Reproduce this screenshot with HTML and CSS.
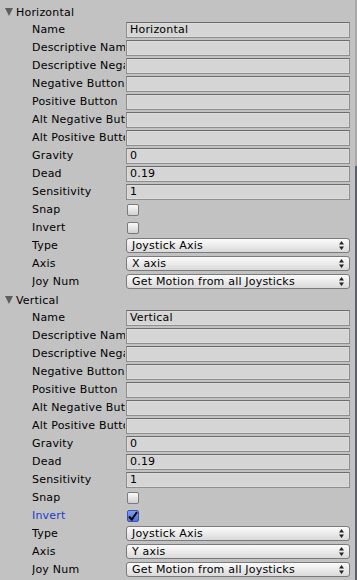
FILE: index.html
```html
<!DOCTYPE html>
<html lang="en">
<head>
    <meta charset="UTF-8">
    <meta name="viewport" content="width=device-width, initial-scale=1.0">
    <title>Input Axes</title>
    <link rel="stylesheet" href="styles.css">
</head>
<body>

<div class="inspector">
    <div class="axes">

        <!-- Horizontal axis -->
        <div class="axis">
            <div class="foldout"><span class="arrow"></span>Horizontal</div>
            <div class="props">
                <div class="label">Name</div>
                <div class="field">Horizontal</div>
                <div class="label">Descriptive Name</div>
                <div class="field"></div>
                <div class="label">Descriptive Negative Name</div>
                <div class="field"></div>
                <div class="label">Negative Button</div>
                <div class="field"></div>
                <div class="label">Positive Button</div>
                <div class="field"></div>
                <div class="label">Alt Negative Button</div>
                <div class="field"></div>
                <div class="label">Alt Positive Button</div>
                <div class="field"></div>
                <div class="label">Gravity</div>
                <div class="field">0</div>
                <div class="label">Dead</div>
                <div class="field">0.19</div>
                <div class="label">Sensitivity</div>
                <div class="field">1</div>
                <div class="label">Snap</div>
                <div class="cell"><span class="toggle"></span></div>
                <div class="label">Invert</div>
                <div class="cell"><span class="toggle"></span></div>
                <div class="label">Type</div>
                <div class="popup">Joystick Axis<svg class="updown" width="5" height="9" viewBox="0 0 5 9"><path d="M2.5 0 L5 3.5 L0 3.5 Z M0 5.5 L5 5.5 L2.5 9 Z" fill="#222"/></svg></div>
                <div class="label">Axis</div>
                <div class="popup">X axis<svg class="updown" width="5" height="9" viewBox="0 0 5 9"><path d="M2.5 0 L5 3.5 L0 3.5 Z M0 5.5 L5 5.5 L2.5 9 Z" fill="#222"/></svg></div>
                <div class="label">Joy Num</div>
                <div class="popup">Get Motion from all Joysticks<svg class="updown" width="5" height="9" viewBox="0 0 5 9"><path d="M2.5 0 L5 3.5 L0 3.5 Z M0 5.5 L5 5.5 L2.5 9 Z" fill="#222"/></svg></div>
            </div>
        </div>

        <!-- Vertical axis -->
        <div class="axis">
            <div class="foldout"><span class="arrow"></span>Vertical</div>
            <div class="props">
                <div class="label">Name</div>
                <div class="field">Vertical</div>
                <div class="label">Descriptive Name</div>
                <div class="field"></div>
                <div class="label">Descriptive Negative Name</div>
                <div class="field"></div>
                <div class="label">Negative Button</div>
                <div class="field"></div>
                <div class="label">Positive Button</div>
                <div class="field"></div>
                <div class="label">Alt Negative Button</div>
                <div class="field"></div>
                <div class="label">Alt Positive Button</div>
                <div class="field"></div>
                <div class="label">Gravity</div>
                <div class="field">0</div>
                <div class="label">Dead</div>
                <div class="field">0.19</div>
                <div class="label">Sensitivity</div>
                <div class="field">1</div>
                <div class="label">Snap</div>
                <div class="cell"><span class="toggle"></span></div>
                <div class="label modified">Invert</div>
                <div class="cell"><span class="toggle on"><svg width="10" height="10" viewBox="0 0 10 10"><path d="M1 5.5 L3.8 8.5 L9 1" fill="none" stroke="#000" stroke-width="2"/></svg></span></div>
                <div class="label">Type</div>
                <div class="popup">Joystick Axis<svg class="updown" width="5" height="9" viewBox="0 0 5 9"><path d="M2.5 0 L5 3.5 L0 3.5 Z M0 5.5 L5 5.5 L2.5 9 Z" fill="#222"/></svg></div>
                <div class="label">Axis</div>
                <div class="popup">Y axis<svg class="updown" width="5" height="9" viewBox="0 0 5 9"><path d="M2.5 0 L5 3.5 L0 3.5 Z M0 5.5 L5 5.5 L2.5 9 Z" fill="#222"/></svg></div>
                <div class="label">Joy Num</div>
                <div class="popup">Get Motion from all Joysticks<svg class="updown" width="5" height="9" viewBox="0 0 5 9"><path d="M2.5 0 L5 3.5 L0 3.5 Z M0 5.5 L5 5.5 L2.5 9 Z" fill="#222"/></svg></div>
            </div>
        </div>

    </div>
    <div class="edge"></div>
</div>

</body>
</html>
```

FILE: styles.css
```css
body {
    margin: 0;
    background-color: #c2c2c2;
    font-family: 'DejaVu Sans', 'Liberation Sans', sans-serif;
    font-size: 11px;
    letter-spacing: 0.2px;
    color: #000;
}

.inspector {
    display: flex;
    height: 580px;
    overflow: hidden;
}

.axes {
    width: 355px;
    padding-top: 3px;
}

.edge {
    width: 2px;
    background: linear-gradient(#a9a9a9 0, #a9a9a9 166px, #58606c 166px, #58606c 100%);
}

.foldout {
    height: 18px;
    display: flex;
    align-items: center;
    padding-left: 5px;
}

.arrow {
    width: 0;
    height: 0;
    border-left: 4.5px solid transparent;
    border-right: 4.5px solid transparent;
    border-top: 8px solid #5e5e5e;
    margin-right: 3px;
}

.props {
    display: grid;
    grid-template-columns: 93px 224px;
    grid-auto-rows: 18px;
    column-gap: 1px;
    padding-left: 32px;
}

.label {
    white-space: nowrap;
    overflow: hidden;
    line-height: 18px;
}

.label.modified {
    color: #1a3ccf;
}

.field {
    margin: 1px 0;
    height: 16px;
    box-sizing: border-box;
    background-color: #d5d5d5;
    border: 1px solid #8e8e8e;
    border-top-color: #6c6c6c;
    box-shadow: inset 0 0 0 1px #dcdcdc;
    padding-left: 3px;
    line-height: 14px;
    white-space: nowrap;
    overflow: hidden;
}

.cell {
    display: flex;
    align-items: center;
}

.toggle {
    width: 12px;
    height: 12px;
    box-sizing: border-box;
    margin-left: 1px;
    border: 1px solid #7a7a7a;
    border-radius: 2px;
    background: linear-gradient(#fafafa, #d0d0d0);
    display: flex;
    align-items: center;
    justify-content: center;
}

.toggle.on {
    background: linear-gradient(#7f9ef0, #4f74e2);
    border-color: #3a55b0;
}

.popup {
    margin-top: 1px;
    height: 15px;
    box-sizing: border-box;
    border: 1px solid #7b7b7b;
    border-radius: 3px;
    background: linear-gradient(#fbfbfb, #dadada);
    padding-left: 5px;
    padding-right: 5px;
    line-height: 13px;
    display: flex;
    align-items: center;
    justify-content: space-between;
    white-space: nowrap;
}
```
